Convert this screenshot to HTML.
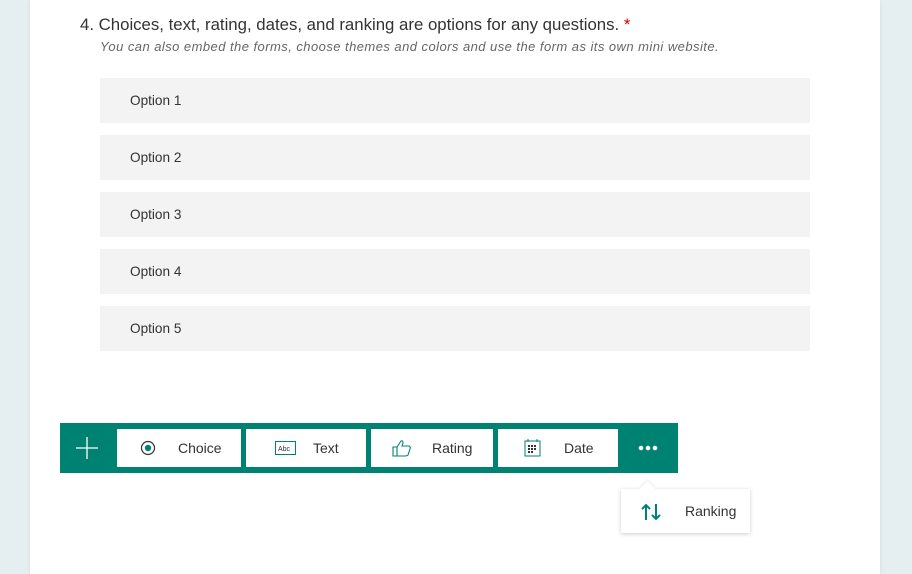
<!DOCTYPE html>
<html><head><style>
body{margin:0;width:912px;height:574px;background:#e5eef1;font-family:"Liberation Sans",sans-serif;position:relative;overflow:hidden}
.card{position:absolute;left:30px;top:0;width:850px;height:574px;background:#fff;box-shadow:0 0 4px rgba(0,0,0,.08)}
.q{position:absolute;left:80px;top:15px;font-size:16.8px;color:#333}
.q span{color:#c00}
.sub{position:absolute;left:100px;top:39px;font-size:13px;font-style:italic;color:#666;letter-spacing:0.45px}
.opt{position:absolute;left:100px;width:710px;height:45px;background:#f3f3f3;font-size:13.6px;color:#333;line-height:45px;text-indent:30px}
.bar{position:absolute;left:60px;top:423px;width:618px;height:50px;background:#008272}
.btn{position:absolute;top:6px;height:38px;background:#fff;font-size:14px;color:#333;line-height:38px}
.btn svg{position:absolute;top:10px}
.btn b{font-weight:normal;position:absolute}
.pop{position:absolute;left:621px;top:489px;width:129px;height:44px;background:#fff;box-shadow:0 1px 4px rgba(0,0,0,.2);font-size:14px;color:#333}
.pop:before{content:"";position:absolute;left:21px;top:-6px;width:11px;height:11px;background:#fff;transform:rotate(45deg);box-shadow:-1px -1px 2px rgba(0,0,0,.08)}
</style></head><body>
<div class="card"></div>
<div class="q">4. Choices, text, rating, dates, and ranking are options for any questions. <span>*</span></div>
<div class="sub">You can also embed the forms, choose themes and colors and use the form as its own mini website.</div>
<div class="opt" style="top:78px">Option 1</div>
<div class="opt" style="top:135px">Option 2</div>
<div class="opt" style="top:192px">Option 3</div>
<div class="opt" style="top:249px">Option 4</div>
<div class="opt" style="top:306px">Option 5</div>
<div class="bar">
<svg style="position:absolute;left:15px;top:13px" width="24" height="24"><path d="M12 1V23M1 12H23" stroke="#fff" stroke-width="1.3"/></svg>
<div class="btn" style="left:57px;width:124px"><svg style="left:23px" width="18" height="18"><circle cx="8" cy="9" r="6.5" fill="none" stroke="#333" stroke-width="1.2"/><circle cx="8" cy="9" r="3.2" fill="#008272"/></svg><b style="left:61px">Choice</b></div>
<div class="btn" style="left:186px;width:120px"><svg style="left:29px;top:11px" width="22" height="16"><rect x="0.5" y="1.5" width="20" height="13" fill="none" stroke="#008272"/><text x="3" y="11" font-size="7" font-family="Liberation Sans" fill="#333">Abc</text></svg><b style="left:67px">Text</b></div>
<div class="btn" style="left:311px;width:122px"><svg style="left:21px" width="20" height="18"><path d="M1 8H5V17H1Z M5 8L9 2Q11 1 11 4L10 7H17Q19 8 18 10L16 16Q15 17 13 17H5" fill="none" stroke="#008272" stroke-width="1.1"/></svg><b style="left:61px">Rating</b></div>
<div class="btn" style="left:438px;width:120px"><svg style="left:26px" width="18" height="18"><rect x="1" y="2" width="15" height="15" fill="none" stroke="#008272"/><path d="M4 0V3M13 0V3" stroke="#008272"/><g fill="#333"><rect x="4" y="6" width="2" height="2"/><rect x="7" y="6" width="2" height="2"/><rect x="10" y="6" width="2" height="2"/><rect x="4" y="9" width="2" height="2"/><rect x="7" y="9" width="2" height="2"/><rect x="10" y="9" width="2" height="2"/><rect x="4" y="12" width="2" height="2"/><rect x="7" y="12" width="2" height="2"/></g></svg><b style="left:66px">Date</b></div>
<svg style="position:absolute;left:578px;top:22px" width="20" height="6"><circle cx="3" cy="3" r="2.3" fill="#fff"/><circle cx="10" cy="3" r="2.3" fill="#fff"/><circle cx="17" cy="3" r="2.3" fill="#fff"/></svg>
</div>
<div class="pop"><svg style="position:absolute;left:20px;top:14px" width="22" height="18"><path d="M5 17V2M1 6L5 2L9 6M15 1V16M11 12L15 16L19 12" fill="none" stroke="#008272" stroke-width="2"/></svg><span style="position:absolute;left:64px;top:14px">Ranking</span></div>
</body></html>
